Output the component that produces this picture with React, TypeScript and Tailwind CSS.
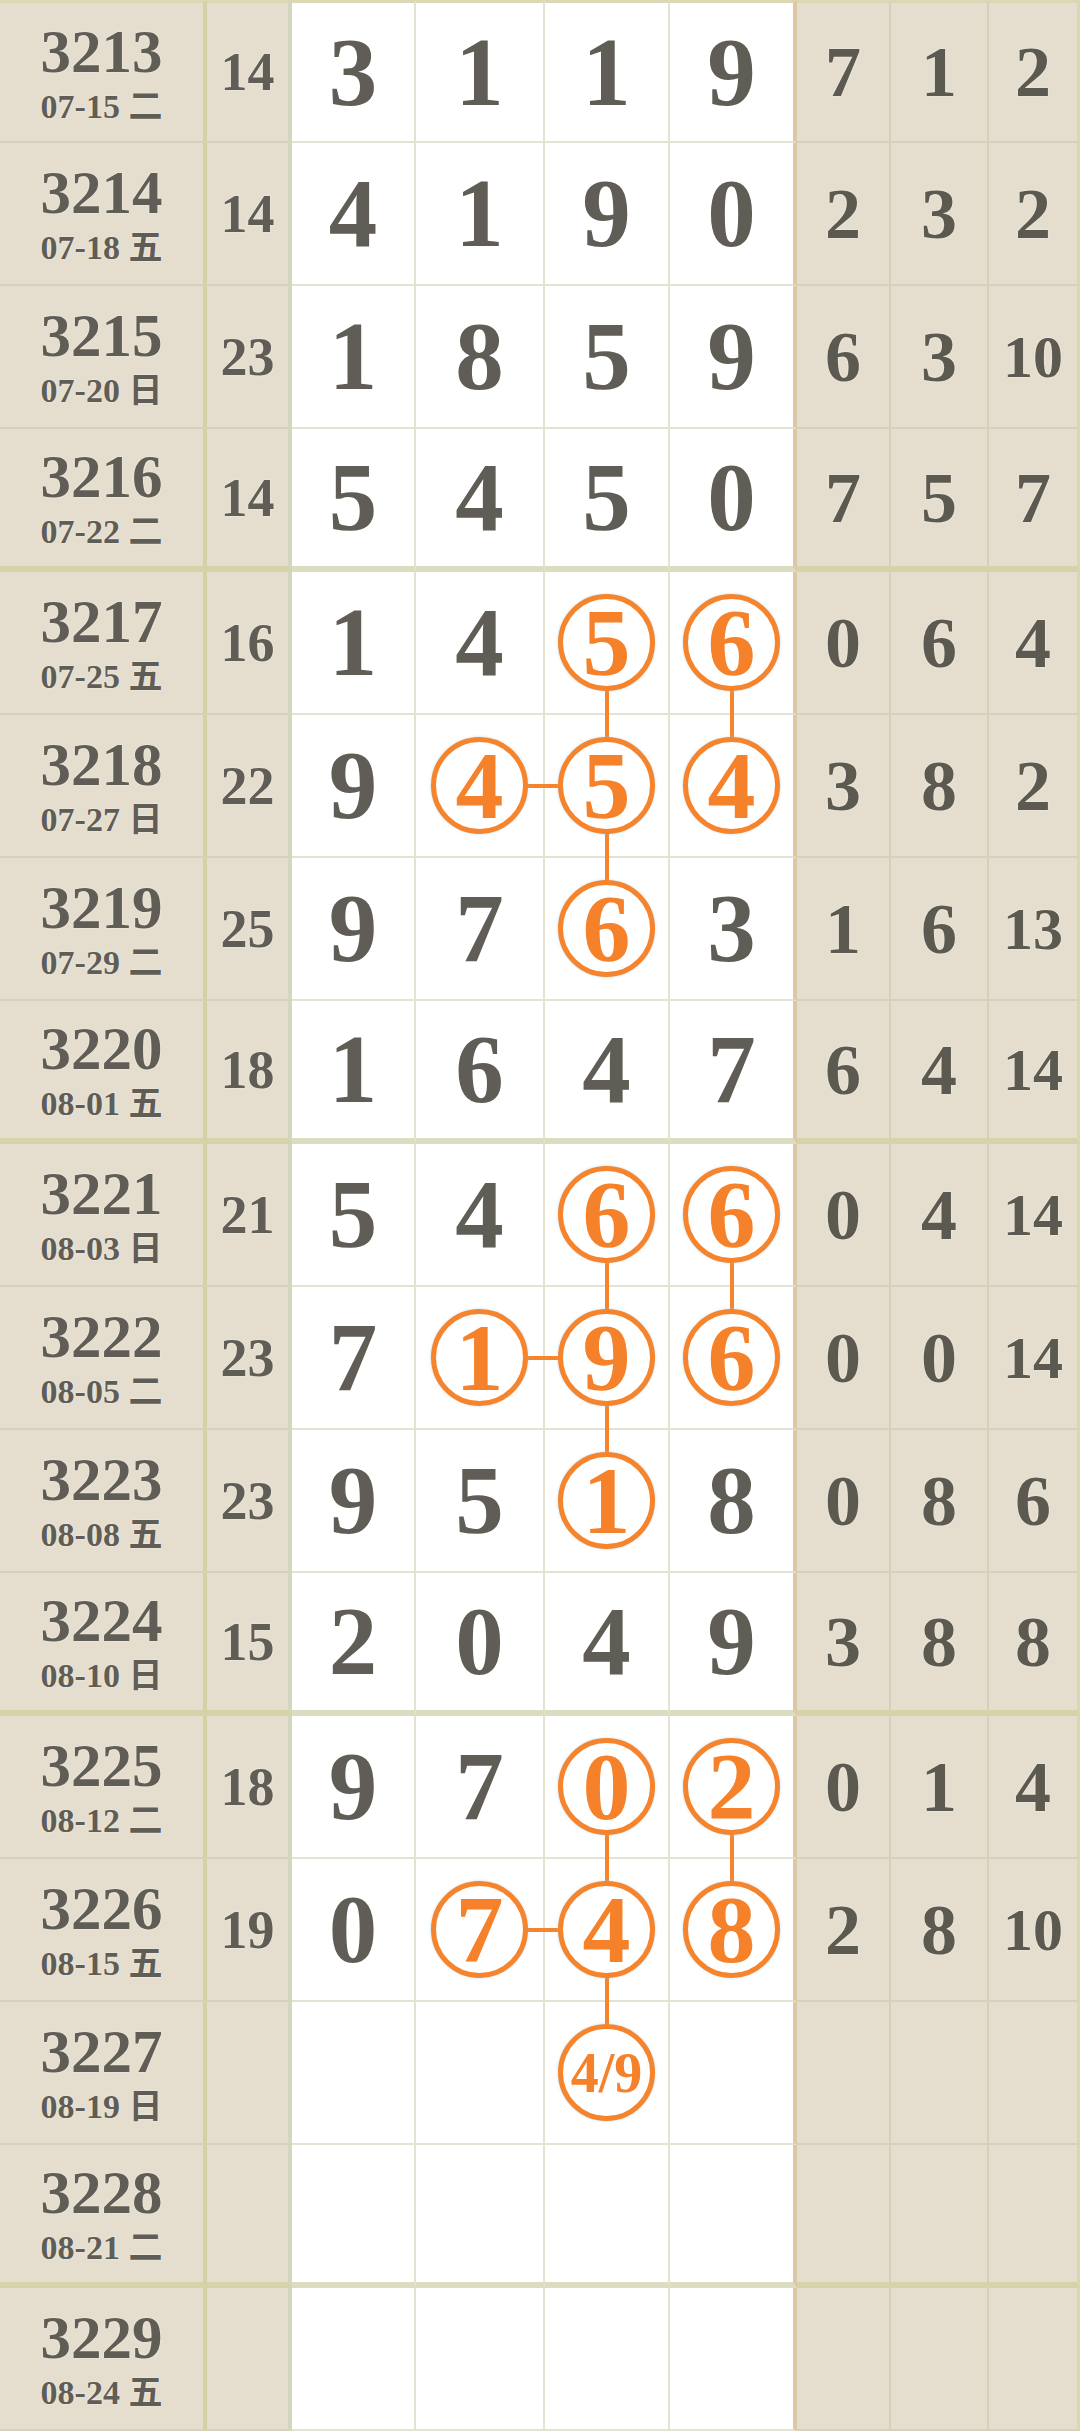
import React from "react";

type Row = {
  issue: number;
  date: string;
  sum?: number;
  d?: (number | string)[];
  r?: number[];
};

const rows: Row[] = [
  { issue: 3213, date: "07-15 二", sum: 14, d: [3, 1, 1, 9], r: [7, 1, 2] },
  { issue: 3214, date: "07-18 五", sum: 14, d: [4, 1, 9, 0], r: [2, 3, 2] },
  { issue: 3215, date: "07-20 日", sum: 23, d: [1, 8, 5, 9], r: [6, 3, 10] },
  { issue: 3216, date: "07-22 二", sum: 14, d: [5, 4, 5, 0], r: [7, 5, 7] },
  { issue: 3217, date: "07-25 五", sum: 16, d: [1, 4, 5, 6], r: [0, 6, 4] },
  { issue: 3218, date: "07-27 日", sum: 22, d: [9, 4, 5, 4], r: [3, 8, 2] },
  { issue: 3219, date: "07-29 二", sum: 25, d: [9, 7, 6, 3], r: [1, 6, 13] },
  { issue: 3220, date: "08-01 五", sum: 18, d: [1, 6, 4, 7], r: [6, 4, 14] },
  { issue: 3221, date: "08-03 日", sum: 21, d: [5, 4, 6, 6], r: [0, 4, 14] },
  { issue: 3222, date: "08-05 二", sum: 23, d: [7, 1, 9, 6], r: [0, 0, 14] },
  { issue: 3223, date: "08-08 五", sum: 23, d: [9, 5, 1, 8], r: [0, 8, 6] },
  { issue: 3224, date: "08-10 日", sum: 15, d: [2, 0, 4, 9], r: [3, 8, 8] },
  { issue: 3225, date: "08-12 二", sum: 18, d: [9, 7, 0, 2], r: [0, 1, 4] },
  { issue: 3226, date: "08-15 五", sum: 19, d: [0, 7, 4, 8], r: [2, 8, 10] },
  { issue: 3227, date: "08-19 日", d: ["", "", "4/9", ""] },
  { issue: 3228, date: "08-21 二" },
  { issue: 3229, date: "08-24 五" },
];

type Mark = { circle?: boolean; up?: boolean; down?: boolean; left?: boolean; right?: boolean };

// group start rows: 4 (3217), 8 (3221), 12 (3225)
function markFor(ri: number, ci: number): Mark {
  for (const g of [4, 8, 12]) {
    if (ri === g) {
      if (ci === 2) return { circle: true, down: true };
      if (ci === 3) return { circle: true, down: true };
    }
    if (ri === g + 1) {
      if (ci === 1) return { circle: true, right: true };
      if (ci === 2) return { circle: true, up: true, down: true, left: true };
      if (ci === 3) return { circle: true, up: true };
    }
    if (ri === g + 2) {
      if (ci === 2) return { circle: true, up: true };
    }
  }
  return {};
}

const FONT = "font-['Liberation_Serif','Noto_Sans_CJK_SC',serif] font-bold";

export default function App() {
  return (
    <div className={`w-[1080px] h-[2432px] overflow-hidden bg-white ${FONT}`}>
      {rows.map((row, ri) => {
        const groupEnd = ri % 4 === 3;
        const first = ri === 0;
        const tanB = groupEnd
          ? "border-b-[6px] border-b-[#d6d3a9]"
          : "border-b-[2px] border-b-[#d8d0bc]";
        const whiteB = groupEnd
          ? "border-b-[6px] border-b-[#dcdcc0]"
          : "border-b-[2px] border-b-[#e4e2d1]";
        const topB = first ? "border-t-[3px] border-t-[#dcd8b4]" : "";
        return (
          <div key={row.issue} className="flex h-[143px]">
            {/* issue */}
            <div
              className={`w-[207px] h-full bg-[#e5dece] border-r-[4px] border-r-[#d4d1a4] ${tanB} ${topB} flex flex-col items-center justify-center text-[#5f5d55] [text-shadow:0_0_2px_rgba(255,255,255,0.7)]`}
            >
              <div className="text-[61px] leading-none">{row.issue}</div>
              <div className="mt-[8px] text-[34px] leading-none whitespace-pre">{row.date}</div>
            </div>
            {/* sum */}
            <div
              className={`w-[85px] h-full bg-[#e5dece] border-r-[4px] border-r-[#d2d7bd] ${tanB} ${topB} flex items-center justify-center text-[54px] leading-none text-[#5f5d55] [text-shadow:0_0_2px_rgba(255,255,255,0.7)]`}
            >
              {row.sum ?? ""}
            </div>
            {/* digits */}
            {[0, 1, 2, 3].map((ci) => {
              const val = row.d ? row.d[ci] : "";
              const m = markFor(ri, ci);
              const width =
                ci === 0
                  ? "w-[124px] border-r-[2px] border-r-[#e4e2d1]"
                  : ci === 1
                  ? "w-[129px] border-r-[2px] border-r-[#e4e2d1]"
                  : ci === 2
                  ? "w-[125px] border-r-[2px] border-r-[#e4e2d1]"
                  : "w-[127px] border-r-[4px] border-r-[#dcc8a6]";
              const small = typeof val === "string" && val.length > 1;
              return (
                <div
                  key={ci}
                  className={`relative ${width} h-full bg-white ${whiteB} ${topB} flex items-center justify-center`}
                >
                  {m.down && (
                    <span className="absolute left-1/2 -translate-x-1/2 top-1/2 bottom-[-8px] w-[4px] bg-[#f5842c] z-10" />
                  )}
                  {m.up && (
                    <span className="absolute left-1/2 -translate-x-1/2 top-[-4px] bottom-1/2 w-[4px] bg-[#f5842c] z-10" />
                  )}
                  {m.right && (
                    <span className="absolute top-1/2 -translate-y-1/2 left-1/2 right-[-4px] h-[4px] bg-[#f5842c] z-10" />
                  )}
                  {m.left && (
                    <span className="absolute top-1/2 -translate-y-1/2 left-[-4px] right-1/2 h-[4px] bg-[#f5842c] z-10" />
                  )}
                  {m.circle ? (
                    <div className="relative z-20 w-[97px] h-[97px] rounded-full border-[5px] border-[#f5842c] bg-white flex items-center justify-center shadow-[0_0_3px_rgba(150,200,230,0.6)]">
                      <span
                        className={`${small ? "text-[56px]" : "text-[96px]"} leading-none text-[#f5822a]`}
                      >
                        {val}
                      </span>
                    </div>
                  ) : (
                    <span className="text-[97px] leading-none text-[#5f5d55]">{val}</span>
                  )}
                </div>
              );
            })}
            {/* right stats */}
            {[0, 1, 2].map((ci) => {
              const v = row.r ? row.r[ci] : undefined;
              const width =
                ci === 0
                  ? "w-[94px] border-r-[2px] border-r-[#d8cfba]"
                  : ci === 1
                  ? "w-[98px] border-r-[2px] border-r-[#d8cfba]"
                  : "flex-1 border-r-[3px] border-r-[#d9d8b2]";
              const two = v !== undefined && v >= 10;
              return (
                <div
                  key={ci}
                  className={`${width} h-full bg-[#e5dece] ${tanB} ${topB} flex items-center justify-center leading-none text-[#5c5a50] [text-shadow:0_0_2px_rgba(255,255,255,0.7)] ${
                    two ? "text-[60px]" : "text-[72px]"
                  }`}
                >
                  {v ?? ""}
                </div>
              );
            })}
          </div>
        );
      })}
    </div>
  );
}
